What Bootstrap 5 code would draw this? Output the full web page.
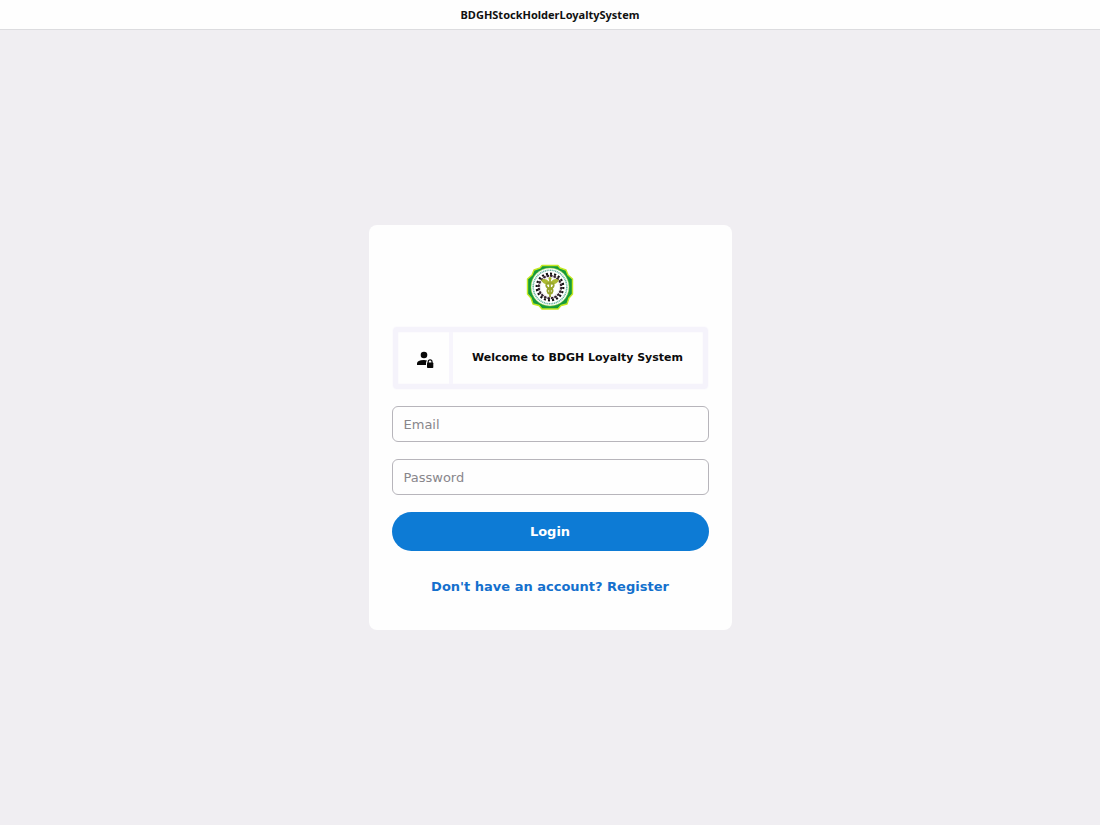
<!DOCTYPE html>
<html lang="en">
<head>
<meta charset="utf-8">
<meta name="viewport" content="width=device-width, initial-scale=1">
<title>BDGHStockHolderLoyaltySystem</title>
<link href="https://cdn.jsdelivr.net/npm/bootstrap@5.3.0/dist/css/bootstrap.min.css" rel="stylesheet">
<style>
  body { background: #f0eef2; font-family: "DejaVu Sans", sans-serif; }
  .title-bar { height: 30px; background: #fefefe; border-bottom: 1px solid #dcdcdf; }
  .title-bar h1 { font: 700 11px/16px "Noto Sans", sans-serif; color: #111; }
  .login-card { max-width: 363px; padding: 38px 23px 31px; border: 0; border-radius: 8px; background: #fefefe; }
  .welcome { height: 62px; margin: 16px 1px 17px; border: 5px solid #f5f3fb; border-radius: 4px; box-shadow: 0 0 2px #f5f3fb, inset 0 0 2px #f5f3fb; }
  .welcome-icon { width: 55px; padding-top: 4px; border-right: 4px solid #f7f5fc; }
  .welcome h2 { font-size: 11px; line-height: 16px; font-weight: 700; color: #0c0c0c; }
  .login-card .form-control { height: 36px; margin-bottom: 17px; padding: 0 11px; font-size: 13px; border: 1px solid #b7b5bb; border-radius: 6px; background: #fefefe; }
  .login-card .form-control::placeholder { color: #88868b; }
  .btn-login { height: 39px; padding: 0; font-size: 13px; font-weight: 700; border-radius: 20px; --bs-btn-color: #fff; --bs-btn-bg: #0d7bd5; --bs-btn-hover-color: #fff; --bs-btn-hover-bg: #0b6dbe; }
  .register { margin-top: 24px; font-size: 13px; line-height: 24px; font-weight: 700; color: #1470cd; }
</style>
</head>
<body class="d-flex flex-column min-vh-100">
<header class="title-bar d-flex align-items-center justify-content-center">
  <h1 class="m-0">BDGHStockHolderLoyaltySystem</h1>
</header>
<main class="flex-grow-1 d-flex align-items-center justify-content-center">
  <form class="card login-card w-100">
    <svg class="mx-auto" width="48" height="48" viewBox="0 0 48 48" role="img" aria-label="BDGH seal">
      <path d="M16 2.500H32L34 5L40 7L42 12L46.500 16V31L43 35L41 41L35 42.500L32 46H16L13 42.500L7 41L5 35L1.500 31V16L6 12L8 7L14 5Z" fill="#159a3b" stroke="#c3e821" stroke-width="1.400" stroke-linejoin="round"/>
      <circle cx="24" cy="24" r="19" fill="#fff" stroke="#a9d83d" stroke-width=".5"/>
      <circle cx="24" cy="24" r="16.800" fill="none" stroke="#69b6a0" stroke-width="1.600" pathLength="120" stroke-dasharray="1.300 .7"/>
      <circle cx="24" cy="24" r="13.300" fill="none" stroke="#111" stroke-width="2.200" pathLength="80" stroke-dasharray="2 2"/>
      <circle cx="24" cy="24" r="11.200" fill="none" stroke="#33202c" stroke-width="2" pathLength="80" stroke-dasharray="3 1"/>
      <circle cx="24" cy="24" r="9.800" fill="#fff" stroke="#ccc" stroke-width=".5"/>
      <path d="M23 18.500Q19 14.500 15 17Q17 21.500 23 21.500ZM25 18.500Q29 14.500 33 17Q31 21.500 25 21.500Z" fill="#acba32"/>
      <path d="M24 16V34M24 20C18 20 20 25 24 25.500S27 30 24 31M24 20C30 20 28 25 24 25.500S21 30 24 31" fill="none" stroke="#98a62a" stroke-width="1.800"/>
      <circle cx="24" cy="15.500" r="1.500" fill="#a8b824"/>
    </svg>
    <div class="welcome d-flex">
      <div class="welcome-icon d-flex align-items-center justify-content-center flex-shrink-0">
        <svg class="ms-1" width="18" height="18" viewBox="0 0 18 18" aria-hidden="true">
          <circle cx="8" cy="4" r="3.300" fill="#080808"/>
          <path d="M1 14V12.500Q1 9 8 9Q10 9 11 9.400Q10 10.500 10 12V14Z" fill="#080808"/>
          <path d="M12.200 12V10.800a1.900 1.900 0 0 1 3.800 0V12" fill="none" stroke="#080808" stroke-width="1.200"/>
          <rect x="11" y="11.500" width="6.300" height="5.500" rx=".8" fill="#080808"/>
        </svg>
      </div>
      <div class="flex-grow-1 d-flex align-items-center justify-content-center">
        <h2 class="m-0">Welcome to BDGH Loyalty System</h2>
      </div>
    </div>
    <input type="email" class="form-control" id="email" aria-label="Email" placeholder="Email">
    <input type="password" class="form-control" id="password" aria-label="Password" placeholder="Password">
    <button type="submit" class="btn btn-login w-100">Login</button>
    <a href="#" class="register mx-auto text-decoration-none">Don't have an account? Register</a>
  </form>
</main>
<script src="https://cdn.jsdelivr.net/npm/bootstrap@5.3.0/dist/js/bootstrap.bundle.min.js"></script>
</body>
</html>
